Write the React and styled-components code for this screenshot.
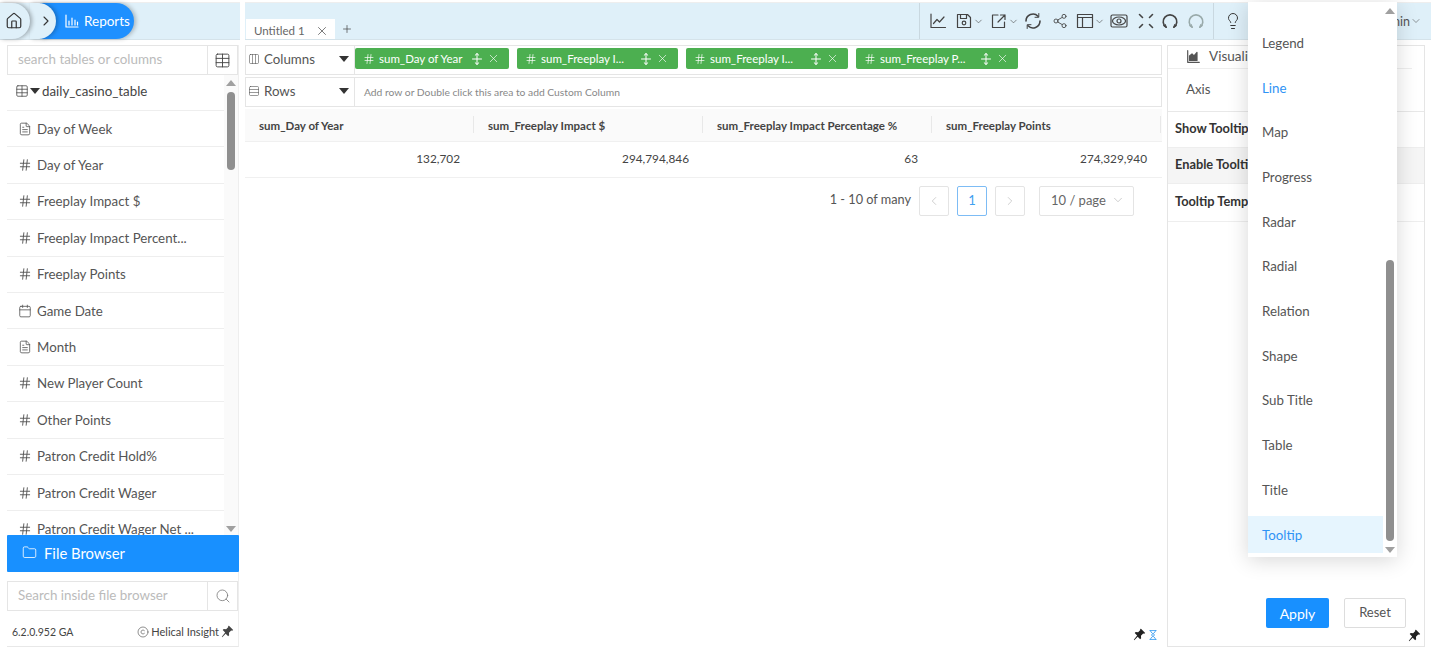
import React from "react";
import styled, { createGlobalStyle } from "styled-components";
import { ChevronDown, ChevronLeft, ChevronRight, Search, X, Plus, Home, Folder, Hash, Table as TableIcon, Columns3, Rows3, FileText, Calendar, Share2, Lightbulb, Copyright } from "lucide-react";

const Global = createGlobalStyle`
  html, body { margin: 0; padding: 0; background: #fff; }
  body { font-family: Lato, "Liberation Sans", sans-serif; color: #555; overflow: hidden; }
  * { box-sizing: border-box; }
`;

const Page = styled.div`
  position: relative; width: 1431px; height: 651px; overflow: hidden; padding-top: 2px;
  background: #fff;
`;
const Header = styled.header`
  height: 38px; display: flex; background: #dff0f9; border-bottom: 1px solid #d5e3ea;
  border-top: 1px solid #eee;
`;
const Crumbs = styled.div`
  width: 240px; display: flex; align-items: center; height: 36px; flex-shrink: 0;
`;
const HomePill = styled.div`
  width: 30px; height: 36px; border-radius: 0 18px 18px 0; background: #dff0f9;
  box-shadow: 2px 0 4px rgba(0,0,0,.3); display: flex; align-items: center; padding-left: 5px;
  color: #333; position: relative; z-index: 3;
`;
const ArrowPill = styled.div`
  width: 26px; height: 36px; border-radius: 0 18px 18px 0; background: #dff0f9;
  box-shadow: 2px 0 4px rgba(0,0,0,.25); display: flex; align-items: center; justify-content: center;
  padding-left: 6px; color: #333; position: relative; z-index: 2;
`;
const ReportPill = styled.div`
  width: 94px; margin-left: -16px; padding-left: 25px; height: 36px; border-radius: 0 18px 18px 0;
  background: #1e90ff; color: #fff; display: flex; align-items: center; gap: 5px; font-size: 13.5px;
  box-shadow: 2px 0 4px rgba(0,0,0,.25);
`;
const Gap = styled.div`
  width: 5px; background: #fff; flex-shrink: 0; margin: -1px 0;
`;
const TabArea = styled.div`
  flex: 1; display: flex; align-items: flex-end; padding-left: 1px;
`;
const Tab = styled.div`
  width: 89px; height: 20px; background: #fff; display: flex; align-items: center;
  justify-content: space-between; padding: 3px 6px 0 8px; font-size: 11.5px; color: #666;
`;
const AddTab = styled.div`
  margin-left: 6px; height: 20px; display: flex; align-items: center; color: #444;
`;
const Tools = styled.div`
  width: 294px; display: flex; align-items: center; border-left: 1px solid #c9d8e0; padding-left: 9px; color: #444;
  flex-shrink: 0;
`;
const ToolSlot = styled.div`
  width: ${p => p.$w}px; display: flex; align-items: center; color: ${p => p.$c || "#444"};
`;
const HeadRight = styled.div`
  width: 218px; flex-shrink: 0; border-left: 1px solid #c9d8e0; display: flex; align-items: center; padding-left: 10px; justify-content: space-between; padding-right: 9px;
  font-size: 13px; color: #555;
`;
const AdminText = styled.span`
  display: flex; align-items: center; font-size: 12.5px;
`;

const Body = styled.div`
  display: flex; height: 606px; margin-top: 5px; padding-left: 7px;
`;
const Sidebar = styled.aside`
  width: 232px; height: 602px; border-bottom: 1px solid #e8e8e8; display: flex; flex-direction: column; flex-shrink: 0;
  border-right: 1px solid #eee;
`;
const SearchBox = styled.div`
  height: 30px; display: flex; border: 1px solid #e5e5e5; flex-shrink: 0; background: #fff;
  margin-top: ${p => p.$mt || 0}px;
`;
const SearchField = styled.div`
  flex: 1; font-size: 13.4px; color: #bbb; padding: 0 0 2px 10px; display: flex; align-items: center;
`;
const SearchBtn = styled.div`
  width: 30px; border-left: 1px solid #e5e5e5; display: flex; align-items: center; justify-content: center; color: #444;
`;
const ListWrap = styled.div`
  height: 460px; display: flex; overflow: hidden;
`;
const List = styled.div`
  flex: 1; overflow: hidden; min-width: 0;
`;
const TableRow = styled.div`
  height: 36px; display: flex; align-items: center; padding: 0 0 3px 8px; font-size: 13.3px; color: #444; gap: 1px;
  border-bottom: 1px solid #eee;
`;
const TableName = styled.span`
  margin-left: 1px;
`;
const Row = styled.div`
  height: 36.4px; display: flex; align-items: center; gap: 5px; padding-left: 11px; font-size: 13.3px; color: #555;
  border-bottom: 1px solid #eee; white-space: nowrap;
`;
const Scroll = styled.div`
  width: ${p => p.$w || 14}px; background: ${p => p.$bg || "#fafafa"}; display: flex; flex-direction: column; align-items: center;
  flex-shrink: 0;
`;
const Thumb = styled.div`
  width: ${p => p.$w || 8}px; height: ${p => p.$h}px; margin-top: ${p => p.$mt}px; background: #8f8f8f; border-radius: 4px; flex-shrink: 0;
`;
const Tri = styled.div`
  width: 0; height: 0; border-left: 5px solid transparent; border-right: 5px solid transparent;
  ${p => p.$up ? "border-bottom: 6px solid #a0a0a0;" : "border-top: 6px solid #a0a0a0;"}
  margin-top: ${p => p.$mt || 0}px; flex-shrink: 0;
`;
const FileBrowser = styled.div`
  height: 37px; width: 232px; background: #1890ff; color: #fff; font-size: 14.8px; display: flex; align-items: center; gap: 7px;
  padding: 0 0 2px 15px; flex-shrink: 0; border-radius: 1px;
`;
const Foot = styled.div`
  flex: 1; display: flex; align-items: center; justify-content: space-between; padding: 0 4px 0 5px; font-size: 10.5px; color: #444; margin-top: 6px;
`;
const Brand = styled.span`
  display: flex; align-items: center; gap: 2px; font-size: 11px;
`;

const Main = styled.main`
  width: 917px; margin-left: 6px; flex-shrink: 0; display: flex; flex-direction: column; position: relative;
`;
const Shelf = styled.div`
  height: 30px; margin-bottom: 2px; border: 1px solid #e5e5e5; display: flex; background: #fff;
`;
const ShelfLabel = styled.div`
  width: 109px; flex-shrink: 0; border-right: 1px solid #e5e5e5; display: flex; align-items: center; gap: 4px; padding: 0 5px 3px 2px; font-size: 13.3px; color: #555;
`;
const ShelfName = styled.span`
  flex: 1;
`;
const Caret = styled.div`
  width: 0; height: 0; border-left: 5px solid transparent; border-right: 5px solid transparent; border-top: 6px solid #333;
`;
const Chips = styled.div`
  display: flex; align-items: center; gap: 8px; padding-bottom: 3px;
`;
const Chip = styled.div`
  width: ${p => p.$w}px; height: 21px; background: #4caf50; color: #fff; border-radius: 2px; display: flex; align-items: center;
  padding: 0 9px 0 8px; font-size: 11.5px; gap: 4px; white-space: nowrap;
`;
const ChipText = styled.span`
  flex: 1; min-width: 0; overflow: hidden;
`;
const ShelfHint = styled.div`
  font-size: 10.3px; color: #888; display: flex; align-items: center; padding-left: 9px;
`;
const GridRow = styled.div`
  display: grid; grid-template-columns: repeat(4, 229px); height: ${p => p.$h}px; background: ${p => p.$bg || "#fff"};
  border-bottom: 1px solid ${p => p.$line || "#f0f0f0"}; width: 917px;
`;
const HeadCell = styled.div`
  display: flex; align-items: center; padding-left: 14px; font-size: 11.5px; font-weight: 700; color: #444; position: relative;
  &::after { content: ""; position: absolute; right: 0; top: 7px; bottom: 8px; width: 1px; background: #e8e8e8; }
`;
const Cell = styled.div`
  display: flex; align-items: center; justify-content: flex-end; padding: 0 14px 3px 0; font-size: 11.8px; color: #444;
`;
const Pager = styled.div`
  display: flex; justify-content: flex-end; align-items: center; gap: 8px; padding-right: 28px; margin-top: 8px; height: 30px; font-size: 12.7px; color: #555;
`;
const PagerText = styled.span`
  padding-bottom: 4px;
`;
const PageBtn = styled.div`
  width: 30px; height: 30px; border: 1px solid ${p => p.$active ? "#7dbcf5" : "#e4e4e4"}; border-radius: 2px; display: flex; align-items: center; justify-content: center;
  color: ${p => p.$active ? "#40a0f0" : "#bbb"}; font-size: 13px; padding-bottom: ${p => p.$active ? 2 : 0}px;
`;
const SizeSel = styled.div`
  width: 95px; height: 30px; border: 1px solid #e4e4e4; border-radius: 2px; margin-left: 6px; display: flex; align-items: center; justify-content: space-between; padding: 0 8px 2px 11px; font-size: 13px; color: #666;
`;
const MainFoot = styled.div`
  position: absolute; right: 5px; top: 583px; display: flex; align-items: center; gap: 3px; color: #222;
`;

const Panel = styled.aside`
  width: 258px; height: 602px; margin-left: 5px; border: 1px solid #e5e5e5; flex-shrink: 0; position: relative; display: flex; flex-direction: column;
`;
const PanelHead = styled.div`
  height: 23px; margin-right: 12px; border-bottom: 1px solid #eee; display: flex; align-items: center; gap: 9px; padding: 0 0 2px 19px; font-size: 13.5px; color: #555;
`;
const AxisRow = styled.div`
  height: 43px; border-bottom: 1px solid #e8e8e8; display: flex; align-items: center; padding: 0 0 3px 18px; font-size: 13.3px; color: #555;
`;
const SettingRow = styled.div`
  height: ${p => p.$h || 36}px; border-bottom: 1px solid #eee; display: flex; align-items: center; padding: 0 0 3px 7px; font-size: 12.8px; font-weight: 700; color: #333;
  background: ${p => p.$bg || "#fff"}; white-space: nowrap;
`;
const Actions = styled.div`
  margin-top: auto; display: flex; justify-content: flex-end; gap: 15px; padding-right: 18px; margin-bottom: 18px;
`;
const ApplyBtn = styled.div`
  width: 63px; height: 30px; background: #1890ff; color: #fff; border-radius: 2px; display: flex; align-items: center; justify-content: center; font-size: 14px;
`;
const ResetBtn = styled.div`
  width: 62px; height: 30px; background: #fff; border: 1px solid #ddd; border-radius: 2px; color: #555; display: flex; align-items: center; justify-content: center; font-size: 13px; padding-bottom: 2px;
`;
const PanelPin = styled.div`
  position: absolute; right: 3px; bottom: 4px; color: #222; display: flex;
`;

const Menu = styled.div`
  position: absolute; left: 1248px; top: 2px; width: 149px; height: 555px; background: #fff; z-index: 10;
  box-shadow: 0 3px 20px rgba(0,0,0,.16); display: flex;
`;
const MenuList = styled.div`
  width: 135px; flex-shrink: 0; padding-top: 18.5px; display: flex; flex-direction: column;
`;
const MenuItem = styled.div`
  height: 44.7px; flex-shrink: 0; display: flex; align-items: center; padding-left: 14px; font-size: 13.3px;
  color: ${p => p.$blue ? "#2f93f5" : "#555"}; background: ${p => p.$sel ? "#e6f5fe" : "transparent"};
`;
const MenuLast = styled(MenuItem)`
  height: 37px; margin-top: 4px;
`;

const Pin = ({ size = 13 }) => (
  <svg width={size} height={size} viewBox="0 0 16 16" fill="currentColor">
    <path d="M9.8 1 15 6.2l-1.2 1-1.3-.3-2.7 2.7.2 3-1.2 1.2-3-3L1.500 15 1 14.500l4.100-5.300-3-3L3.300 5l3 .2 2.700-2.700-.3-1.300z" />
  </svg>
);
const Sv = ({ w = 18, h = 18, vb = "0 0 18 18", children }) => (
  <svg width={w} height={h} viewBox={vb} fill="none" stroke="currentColor" strokeWidth="1.2" strokeLinecap="round" strokeLinejoin="round">{children}</svg>
);
const Chev = () => <ChevronDown size={11} strokeWidth={1.3} />;
const Arc = () => (
  <Sv>
    <path d="M5 15.200A6.800 6.800 0 1 1 13 15.200" strokeWidth="1.600" />
    <path d="M2.800 13.600 5.400 15.400 4.300 12.600M15.200 13.600 12.600 15.400 13.700 12.600" strokeWidth="1.100" />
  </Sv>
);

const fields = [
  ["doc", "Day of Week"], ["hash", "Day of Year"], ["hash", "Freeplay Impact $"], ["hash", "Freeplay Impact Percent..."],
  ["hash", "Freeplay Points"], ["cal", "Game Date"], ["doc", "Month"], ["hash", "New Player Count"], ["hash", "Other Points"],
  ["hash", "Patron Credit Hold%"], ["hash", "Patron Credit Wager"], ["hash", "Patron Credit Wager Net ..."],
];
const FieldIcon = ({ t }) => t === "doc" ? <FileText size={14} strokeWidth={1.4} /> : t === "cal" ? <Calendar size={14} strokeWidth={1.4} /> : <Hash size={14} strokeWidth={1.6} />;
const chips = [[154, "sum_Day of Year"], [161, "sum_Freeplay I..."], [162, "sum_Freeplay I..."], [162, "sum_Freeplay P..."]];
const heads = ["sum_Day of Year", "sum_Freeplay Impact $", "sum_Freeplay Impact Percentage %", "sum_Freeplay Points"];
const vals = ["132,702", "294,794,846", "63", "274,329,940"];
const items = ["Legend", "Line", "Map", "Progress", "Radar", "Radial", "Relation", "Shape", "Sub Title", "Table", "Title"];

const Split = () => (
  <Sv w={12} h={12} vb="0 0 12 12"><path d="M6 .5v11M1.500 6h9M4.200 2.200 6 .6l1.800 1.600M4.200 9.800 6 11.400l1.800-1.600" strokeWidth="1" /></Sv>
);

export default function App() {
  return (
    <Page>
      <Global />
      <Header>
        <Crumbs>
          <HomePill><Home size={18} strokeWidth={1.6} /></HomePill>
          <ArrowPill><ChevronRight size={16} strokeWidth={1.6} /></ArrowPill>
          <ReportPill>
            <Sv w={14} h={14} vb="0 0 14 14"><path d="M1 1v12h12M4 11V7M7 11V4M10 11V6M12.500 11V8" /></Sv>
            Reports
          </ReportPill>
        </Crumbs>
        <Gap />
        <TabArea>
          <Tab>Untitled 1<X size={14} strokeWidth={1.2} color="#444" /></Tab>
          <AddTab><Plus size={12} strokeWidth={1.4} /></AddTab>
        </TabArea>
        <Tools>
          <ToolSlot $w={26}><Sv><path d="M2 2v13.500h14.500M4.500 11.500l3.500-4 2.500 2.500L15 5" /></Sv></ToolSlot>
          <ToolSlot $w={35}><Sv><path d="M2.500 2.500h10l3 3v10h-13zM5.500 2.500v4h6v-4" /><circle cx="9" cy="11" r="1.800" /></Sv><Chev /></ToolSlot>
          <ToolSlot $w={34}><Sv><path d="M8 3H2.500v12.500h12V10M8 10l7-7M10.500 3H15v4.500" /></Sv><Chev /></ToolSlot>
          <ToolSlot $w={28}><Sv><path d="M16 9a7 7 0 0 1-12 4.800M2 9A7 7 0 0 1 14 4.200" strokeWidth="1.600" /><path d="M14.800 1.500v3.800H11M3.200 16.500v-3.800H7" strokeWidth="1" /></Sv></ToolSlot>
          <ToolSlot $w={24}><Share2 size={16} strokeWidth={1.3} /></ToolSlot>
          <ToolSlot $w={34}><Sv><path d="M1.500 2.500h15v13h-15zM1.500 5.500h15M6.500 5.500v10" /></Sv><Chev /></ToolSlot>
          <ToolSlot $w={27}><Sv><rect x="1" y="3" width="16" height="12" rx="1.500" /><ellipse cx="9" cy="9" rx="6.500" ry="4" /><circle cx="9" cy="9" r="2" /></Sv></ToolSlot>
          <ToolSlot $w={24}><Sv><path d="M2.500 2.500l3 3M15.500 2.500l-3 3M2.500 15.500l3-3M15.500 15.500l-3-3" strokeWidth="1.600" /></Sv></ToolSlot>
          <ToolSlot $w={26}><Arc /></ToolSlot>
          <ToolSlot $w={18} $c="#9aa"><Arc /></ToolSlot>
        </Tools>
        <HeadRight>
          <Lightbulb size={18} strokeWidth={1.3} color="#333" />
          <AdminText>min<ChevronDown size={12} strokeWidth={1.2} /></AdminText>
        </HeadRight>
      </Header>
      <Body>
        <Sidebar>
          <SearchBox>
            <SearchField>search tables or columns</SearchField>
            <SearchBtn><TableIcon size={17} strokeWidth={1.3} /></SearchBtn>
          </SearchBox>
          <ListWrap>
            <List>
              <TableRow><TableIcon size={14} strokeWidth={1.3} /><Caret /><TableName>daily_casino_table</TableName></TableRow>
              {fields.map(([t, n]) => <Row key={n}><FieldIcon t={t} />{n}</Row>)}
            </List>
            <Scroll>
              <Tri $up $mt={5} />
              <Thumb $h={78} $mt={6} />
              <Tri $mt={356} />
            </Scroll>
          </ListWrap>
          <FileBrowser><Folder size={15} strokeWidth={1.3} />File Browser</FileBrowser>
          <SearchBox $mt={9}>
            <SearchField>Search inside file browser</SearchField>
            <SearchBtn><Search size={16} strokeWidth={1.2} color="#777" /></SearchBtn>
          </SearchBox>
          <Foot>
            <span>6.2.0.952 GA</span>
            <Brand><Copyright size={12} strokeWidth={1.2} /> Helical Insight <Pin /></Brand>
          </Foot>
        </Sidebar>
        <Main>
          <Shelf>
            <ShelfLabel><Columns3 size={12} strokeWidth={1.2} /><ShelfName>Columns</ShelfName><Caret /></ShelfLabel>
            <Chips>
              {chips.map(([w, t], i) => (
                <Chip key={i} $w={w}><Hash size={12} strokeWidth={1.4} /><ChipText>{t}</ChipText><Split /><X size={13} strokeWidth={1.2} /></Chip>
              ))}
            </Chips>
          </Shelf>
          <Shelf>
            <ShelfLabel><Rows3 size={12} strokeWidth={1.2} /><ShelfName>Rows</ShelfName><Caret /></ShelfLabel>
            <ShelfHint>Add row or Double click this area to add Custom Column</ShelfHint>
          </Shelf>
          <GridRow $h={33} $bg="#fafafa">{heads.map(h => <HeadCell key={h}>{h}</HeadCell>)}</GridRow>
          <GridRow $h={36}>{vals.map(v => <Cell key={v}>{v}</Cell>)}</GridRow>
          <Pager>
            <PagerText>1 - 10 of many</PagerText>
            <PageBtn><ChevronLeft size={14} strokeWidth={1.2} /></PageBtn>
            <PageBtn $active>1</PageBtn>
            <PageBtn><ChevronRight size={14} strokeWidth={1.2} /></PageBtn>
            <SizeSel>10 / page<ChevronDown size={14} strokeWidth={1} color="#aaa" /></SizeSel>
          </Pager>
          <MainFoot>
            <Pin />
            <Sv w={8} h={10} vb="0 0 9 11"><path d="M1 .5h7M1 10.500h7M1.500 .5c0 3 5 4 5 5s-5 2-5 5M7.500 .5c0 3-5 4-5 5s5 2 5 5" stroke="#40a0f0" strokeWidth="1" /></Sv>
          </MainFoot>
        </Main>
        <Panel>
          <PanelHead><Sv w={13} h={13} vb="0 0 13 13"><path d="M.7 .7v11.600h11.600" /><path d="M2.500 10.500V6l2.500-2 2 2 3-3.500v8z" fill="currentColor" /></Sv>Visualize</PanelHead>
          <AxisRow>Axis</AxisRow>
          <SettingRow>Show Tooltip</SettingRow>
          <SettingRow $bg="#f5f5f5">Enable Tooltip</SettingRow>
          <SettingRow $h={38}>Tooltip Template</SettingRow>
          <Actions><ApplyBtn>Apply</ApplyBtn><ResetBtn>Reset</ResetBtn></Actions>
          <PanelPin><Pin /></PanelPin>
        </Panel>
      </Body>
      <Menu>
        <MenuList>
          {items.map(i => <MenuItem key={i} $blue={i === "Line"}>{i}</MenuItem>)}
          <MenuLast $blue $sel>Tooltip</MenuLast>
        </MenuList>
        <Scroll $bg="#fff">
          <Tri $up $mt={6} />
          <Thumb $h={281} $mt={246} />
          <Tri $mt={6} />
        </Scroll>
      </Menu>
    </Page>
  );
}
